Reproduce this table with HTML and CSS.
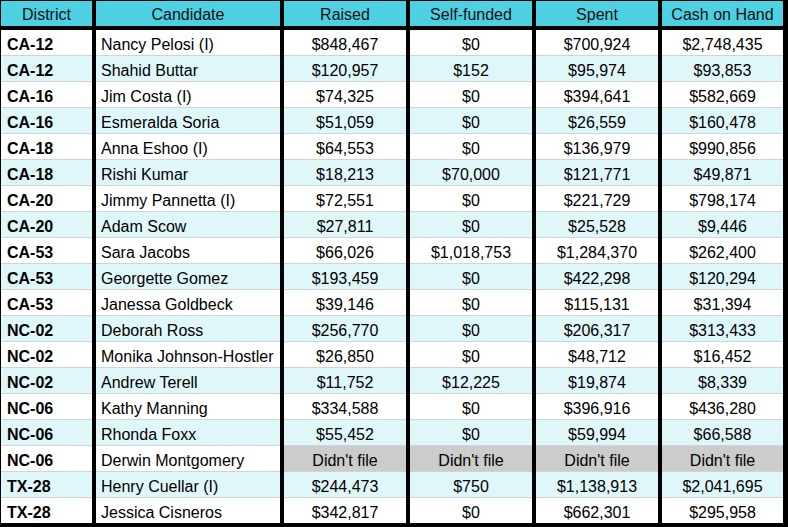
FILE: index.html
```html
<!DOCTYPE html>
<html lang="en">
<head>
<meta charset="utf-8">
<title>Campaign finance</title>
<link rel="stylesheet" href="styles.css">
</head>
<body>
<div class="sheet">
  <div class="row head">
    <div class="cell">District</div><div class="cell">Candidate</div><div class="cell">Raised</div><div class="cell">Self-funded</div><div class="cell">Spent</div><div class="cell">Cash on Hand</div>
  </div>
  <div class="row"><div class="cell dist">CA-12</div><div class="cell name">Nancy Pelosi (I)</div><div class="cell num">$848,467</div><div class="cell num">$0</div><div class="cell num">$700,924</div><div class="cell num">$2,748,435</div></div>
  <div class="row alt"><div class="cell dist">CA-12</div><div class="cell name">Shahid Buttar</div><div class="cell num">$120,957</div><div class="cell num">$152</div><div class="cell num">$95,974</div><div class="cell num">$93,853</div></div>
  <div class="row"><div class="cell dist">CA-16</div><div class="cell name">Jim Costa (I)</div><div class="cell num">$74,325</div><div class="cell num">$0</div><div class="cell num">$394,641</div><div class="cell num">$582,669</div></div>
  <div class="row alt"><div class="cell dist">CA-16</div><div class="cell name">Esmeralda Soria</div><div class="cell num">$51,059</div><div class="cell num">$0</div><div class="cell num">$26,559</div><div class="cell num">$160,478</div></div>
  <div class="row"><div class="cell dist">CA-18</div><div class="cell name">Anna Eshoo (I)</div><div class="cell num">$64,553</div><div class="cell num">$0</div><div class="cell num">$136,979</div><div class="cell num">$990,856</div></div>
  <div class="row alt"><div class="cell dist">CA-18</div><div class="cell name">Rishi Kumar</div><div class="cell num">$18,213</div><div class="cell num">$70,000</div><div class="cell num">$121,771</div><div class="cell num">$49,871</div></div>
  <div class="row"><div class="cell dist">CA-20</div><div class="cell name">Jimmy Pannetta (I)</div><div class="cell num">$72,551</div><div class="cell num">$0</div><div class="cell num">$221,729</div><div class="cell num">$798,174</div></div>
  <div class="row alt"><div class="cell dist">CA-20</div><div class="cell name">Adam Scow</div><div class="cell num">$27,811</div><div class="cell num">$0</div><div class="cell num">$25,528</div><div class="cell num">$9,446</div></div>
  <div class="row"><div class="cell dist">CA-53</div><div class="cell name">Sara Jacobs</div><div class="cell num">$66,026</div><div class="cell num">$1,018,753</div><div class="cell num">$1,284,370</div><div class="cell num">$262,400</div></div>
  <div class="row alt"><div class="cell dist">CA-53</div><div class="cell name">Georgette Gomez</div><div class="cell num">$193,459</div><div class="cell num">$0</div><div class="cell num">$422,298</div><div class="cell num">$120,294</div></div>
  <div class="row"><div class="cell dist">CA-53</div><div class="cell name">Janessa Goldbeck</div><div class="cell num">$39,146</div><div class="cell num">$0</div><div class="cell num">$115,131</div><div class="cell num">$31,394</div></div>
  <div class="row alt"><div class="cell dist">NC-02</div><div class="cell name">Deborah Ross</div><div class="cell num">$256,770</div><div class="cell num">$0</div><div class="cell num">$206,317</div><div class="cell num">$313,433</div></div>
  <div class="row"><div class="cell dist">NC-02</div><div class="cell name">Monika Johnson-Hostler</div><div class="cell num">$26,850</div><div class="cell num">$0</div><div class="cell num">$48,712</div><div class="cell num">$16,452</div></div>
  <div class="row alt"><div class="cell dist">NC-02</div><div class="cell name">Andrew Terell</div><div class="cell num">$11,752</div><div class="cell num">$12,225</div><div class="cell num">$19,874</div><div class="cell num">$8,339</div></div>
  <div class="row"><div class="cell dist">NC-06</div><div class="cell name">Kathy Manning</div><div class="cell num">$334,588</div><div class="cell num">$0</div><div class="cell num">$396,916</div><div class="cell num">$436,280</div></div>
  <div class="row alt"><div class="cell dist">NC-06</div><div class="cell name">Rhonda Foxx</div><div class="cell num">$55,452</div><div class="cell num">$0</div><div class="cell num">$59,994</div><div class="cell num">$66,588</div></div>
  <div class="row"><div class="cell dist">NC-06</div><div class="cell name">Derwin Montgomery</div><div class="cell num nofile">Didn't file</div><div class="cell num nofile">Didn't file</div><div class="cell num nofile">Didn't file</div><div class="cell num nofile">Didn't file</div></div>
  <div class="row alt"><div class="cell dist">TX-28</div><div class="cell name">Henry Cuellar (I)</div><div class="cell num">$244,473</div><div class="cell num">$750</div><div class="cell num">$1,138,913</div><div class="cell num">$2,041,695</div></div>
  <div class="row last"><div class="cell dist">TX-28</div><div class="cell name">Jessica Cisneros</div><div class="cell num">$342,817</div><div class="cell num">$0</div><div class="cell num">$662,301</div><div class="cell num">$295,958</div></div>
</div>
</body>
</html>
```

FILE: styles.css
```css
html, body {
  margin: 0;
  padding: 0;
  background: #000;
}

.sheet {
  width: 788px;
  height: 527px;
  box-sizing: border-box;
  background: #000;
  padding: 1px 5px 0 1px;
  display: grid;
  grid-template-columns: 91px 184px 122px 122px 122px 121px;
  grid-auto-rows: min-content;
  column-gap: 4px;
  font-family: "Liberation Sans", Arial, sans-serif;
  font-size: 16px;
  color: #000;
}

.row {
  display: contents;
}

.cell {
  height: 23px;
  padding-top: 2px;
  line-height: 25px;
  background: #fff;
  border-bottom: 1px solid #cdd6d6;
  white-space: nowrap;
}

.head .cell {
  height: 24px;
  padding-top: 1px;
  background: #4dd0e1;
  text-align: center;
  color: #111;
  border-bottom: 4px solid #000;
}

.alt .cell {
  background: #e0f7fa;
}

.last .cell {
  border-bottom: none;
}

.dist {
  font-weight: bold;
  padding-left: 6px;
}

.name {
  padding-left: 5px;
}

.num {
  text-align: center;
}

.row .nofile {
  background: #cccccc;
}
```
